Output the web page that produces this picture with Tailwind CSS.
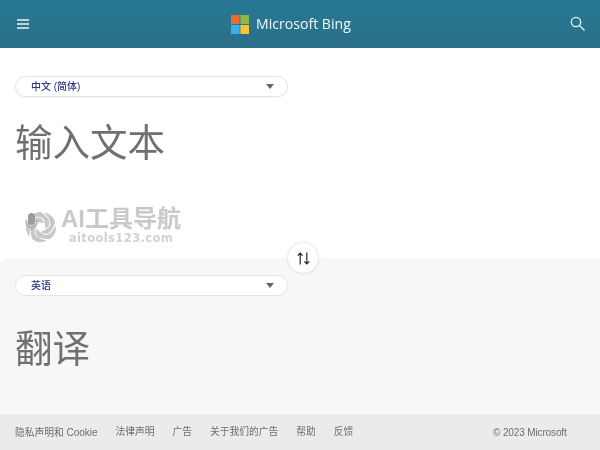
<!doctype html>
<html lang="zh">
<head>
<meta charset="utf-8">
<script src="https://cdn.jsdelivr.net/npm/@tailwindcss/browser@4"></script>
</head>
<body class="m-0 bg-white">
<div class="relative flex h-[450px] w-[600px] flex-col overflow-hidden font-['Liberation_Sans','Noto_Sans_CJK_SC',sans-serif]">
  <header class="relative flex h-12 shrink-0 items-center justify-between bg-gradient-to-b from-[#277995] to-[#2b6f88] pl-4 pr-[14px] text-white">
    <svg class="h-3 w-3.5" viewBox="0 0 14 12" fill="none" stroke="#eef4f7" stroke-width="1.3"><path d="M1 2h12M1 6h12M1 10h12"/></svg>
    <div class="mr-[18px] flex items-center gap-[7px]">
      <svg class="h-[19px] w-[18px]" viewBox="0 0 18 19"><rect width="8.6" height="9" fill="#ea6a32"/><rect x="9.4" width="8.6" height="9" fill="#8bbb45"/><rect y="10" width="8.6" height="9" fill="#39aeea"/><rect x="9.4" y="10" width="8.6" height="9" fill="#fbc234"/></svg>
      <span class="font-['Open_Sans',sans-serif] text-[14.1px] font-medium leading-none text-[#f2f7f9] will-change-transform">Microsoft Bing</span>
    </div>
    <svg class="h-4 w-4" viewBox="0 0 16 16" fill="none" stroke="#eef4f7" stroke-width="1.3"><circle cx="6" cy="6" r="4.7"/><path d="M9.5 9.5l5 5"/></svg>
  </header>

  <section class="flex h-[210px] shrink-0 flex-col bg-white pl-[15px] pt-[28px]">
    <div class="flex h-[21px] w-[273px] items-center justify-between rounded-full border border-[#e3e3e3] bg-white pl-[15px] pr-[13px] text-[10px] font-medium text-[#2b3585] shadow-[0_1px_1px_rgba(0,0,0,0.04)]">
      <span class="will-change-transform">中文 (简体)</span>
      <span class="h-0 w-0 border-x-[4.5px] border-t-[5px] border-x-transparent border-t-[#666]"></span>
    </div>
    <div class="mt-[24px] text-[37.5px] leading-[44px] text-[#707070] will-change-transform">输入文本</div>
  </section>

  <section class="relative flex h-[156px] shrink-0 flex-col rounded-tl-[8px] bg-[#f7f7f7] pl-[15px] pt-[17px]">
    <div class="flex h-[21px] w-[273px] items-center justify-between rounded-full border border-[#e3e3e3] bg-white pl-[15px] pr-[13px] text-[10px] font-medium text-[#2b3585]">
      <span class="will-change-transform">英语</span>
      <span class="h-0 w-0 border-x-[4.5px] border-t-[5px] border-x-transparent border-t-[#666]"></span>
    </div>
    <div class="mt-[31px] text-[37.5px] leading-[44px] text-[#707070] will-change-transform">翻译</div>
  </section>

  <footer class="flex h-9 shrink-0 items-center justify-between bg-[#ebebeb] pl-[15px] pr-[33px] pt-px text-[9.75px] text-[#6e6e6e]">
    <div class="flex gap-[18px] will-change-transform">
      <span>隐私声明和 <span class="text-[10px]">Cookie</span></span><span>法律声明</span><span>广告</span><span>关于我们的广告</span><span>帮助</span><span>反馈</span>
    </div>
    <span class="text-[10px] tracking-[-0.13px] will-change-transform">© 2023 Microsoft</span>
  </footer>

  <button class="absolute left-[288px] top-[243px] flex h-[30px] w-[30px] items-center justify-center rounded-full bg-white shadow-[0_0_3px_rgba(0,0,0,0.18)]">
    <svg class="h-[13px] w-[13px]" viewBox="0 0 13 13" fill="none" stroke="#222" stroke-width="1.15"><path d="M3.2 12.5V1M0.8 3.6L3.2 1l2.4 2.6M9.8 0.5V12M7.4 9.4L9.8 12l2.4-2.6"/></svg>
  </button>

  <div class="absolute left-[23px] top-[205px] flex items-center gap-[4px]">
    <svg class="h-[36px] w-[34px]" viewBox="0 0 34 36">
      <g fill="#c8c8c8" transform="translate(-1 0)">
        <path d="M6 12.500A15 15 0 0 1 19 5Q33 15.300 23.700 21.700L22.800 16.800Q21.800 5.350 6 12.500Z"/>
        <path d="M6 12.500A15 15 0 0 1 19 5Q33 15.300 23.700 21.700L22.800 16.800Q21.800 5.350 6 12.500Z" transform="rotate(72 19 20)"/>
        <path d="M6 12.500A15 15 0 0 1 19 5Q33 15.300 23.700 21.700L22.800 16.800Q21.800 5.350 6 12.500Z" transform="rotate(144 19 20)"/>
        <path d="M6 12.500A15 15 0 0 1 19 5Q33 15.300 23.700 21.700L22.800 16.800Q21.800 5.350 6 12.500Z" transform="rotate(216 19 20)"/>
        <path d="M6 12.500A15 15 0 0 1 19 5Q33 15.300 23.700 21.700L22.800 16.800Q21.800 5.350 6 12.500Z" transform="rotate(288 19 20)"/>
      </g>
      <rect x="5" y="6" width="7" height="12" rx="3.500" fill="#9c9c9c"/>
      <path d="M3 13c0 5 3 7 5.500 7s5.500-2 5.500-7" fill="none" stroke="#b0b0b0" stroke-width="1.500"/>
      <path d="M8.500 20v3" stroke="#b0b0b0" stroke-width="2"/>
    </svg>
    <div class="flex flex-col items-center will-change-transform">
      <span class="text-[24px] font-bold leading-[27px] text-[#c9c9c9]">AI工具导航</span>
      <span class="font-['DejaVu_Sans',sans-serif] text-[11.5px] font-bold leading-[13px] tracking-[0.4px] text-[#d2d2d2]">aitools123.com</span>
    </div>
  </div>
</div>
</body>
</html>
